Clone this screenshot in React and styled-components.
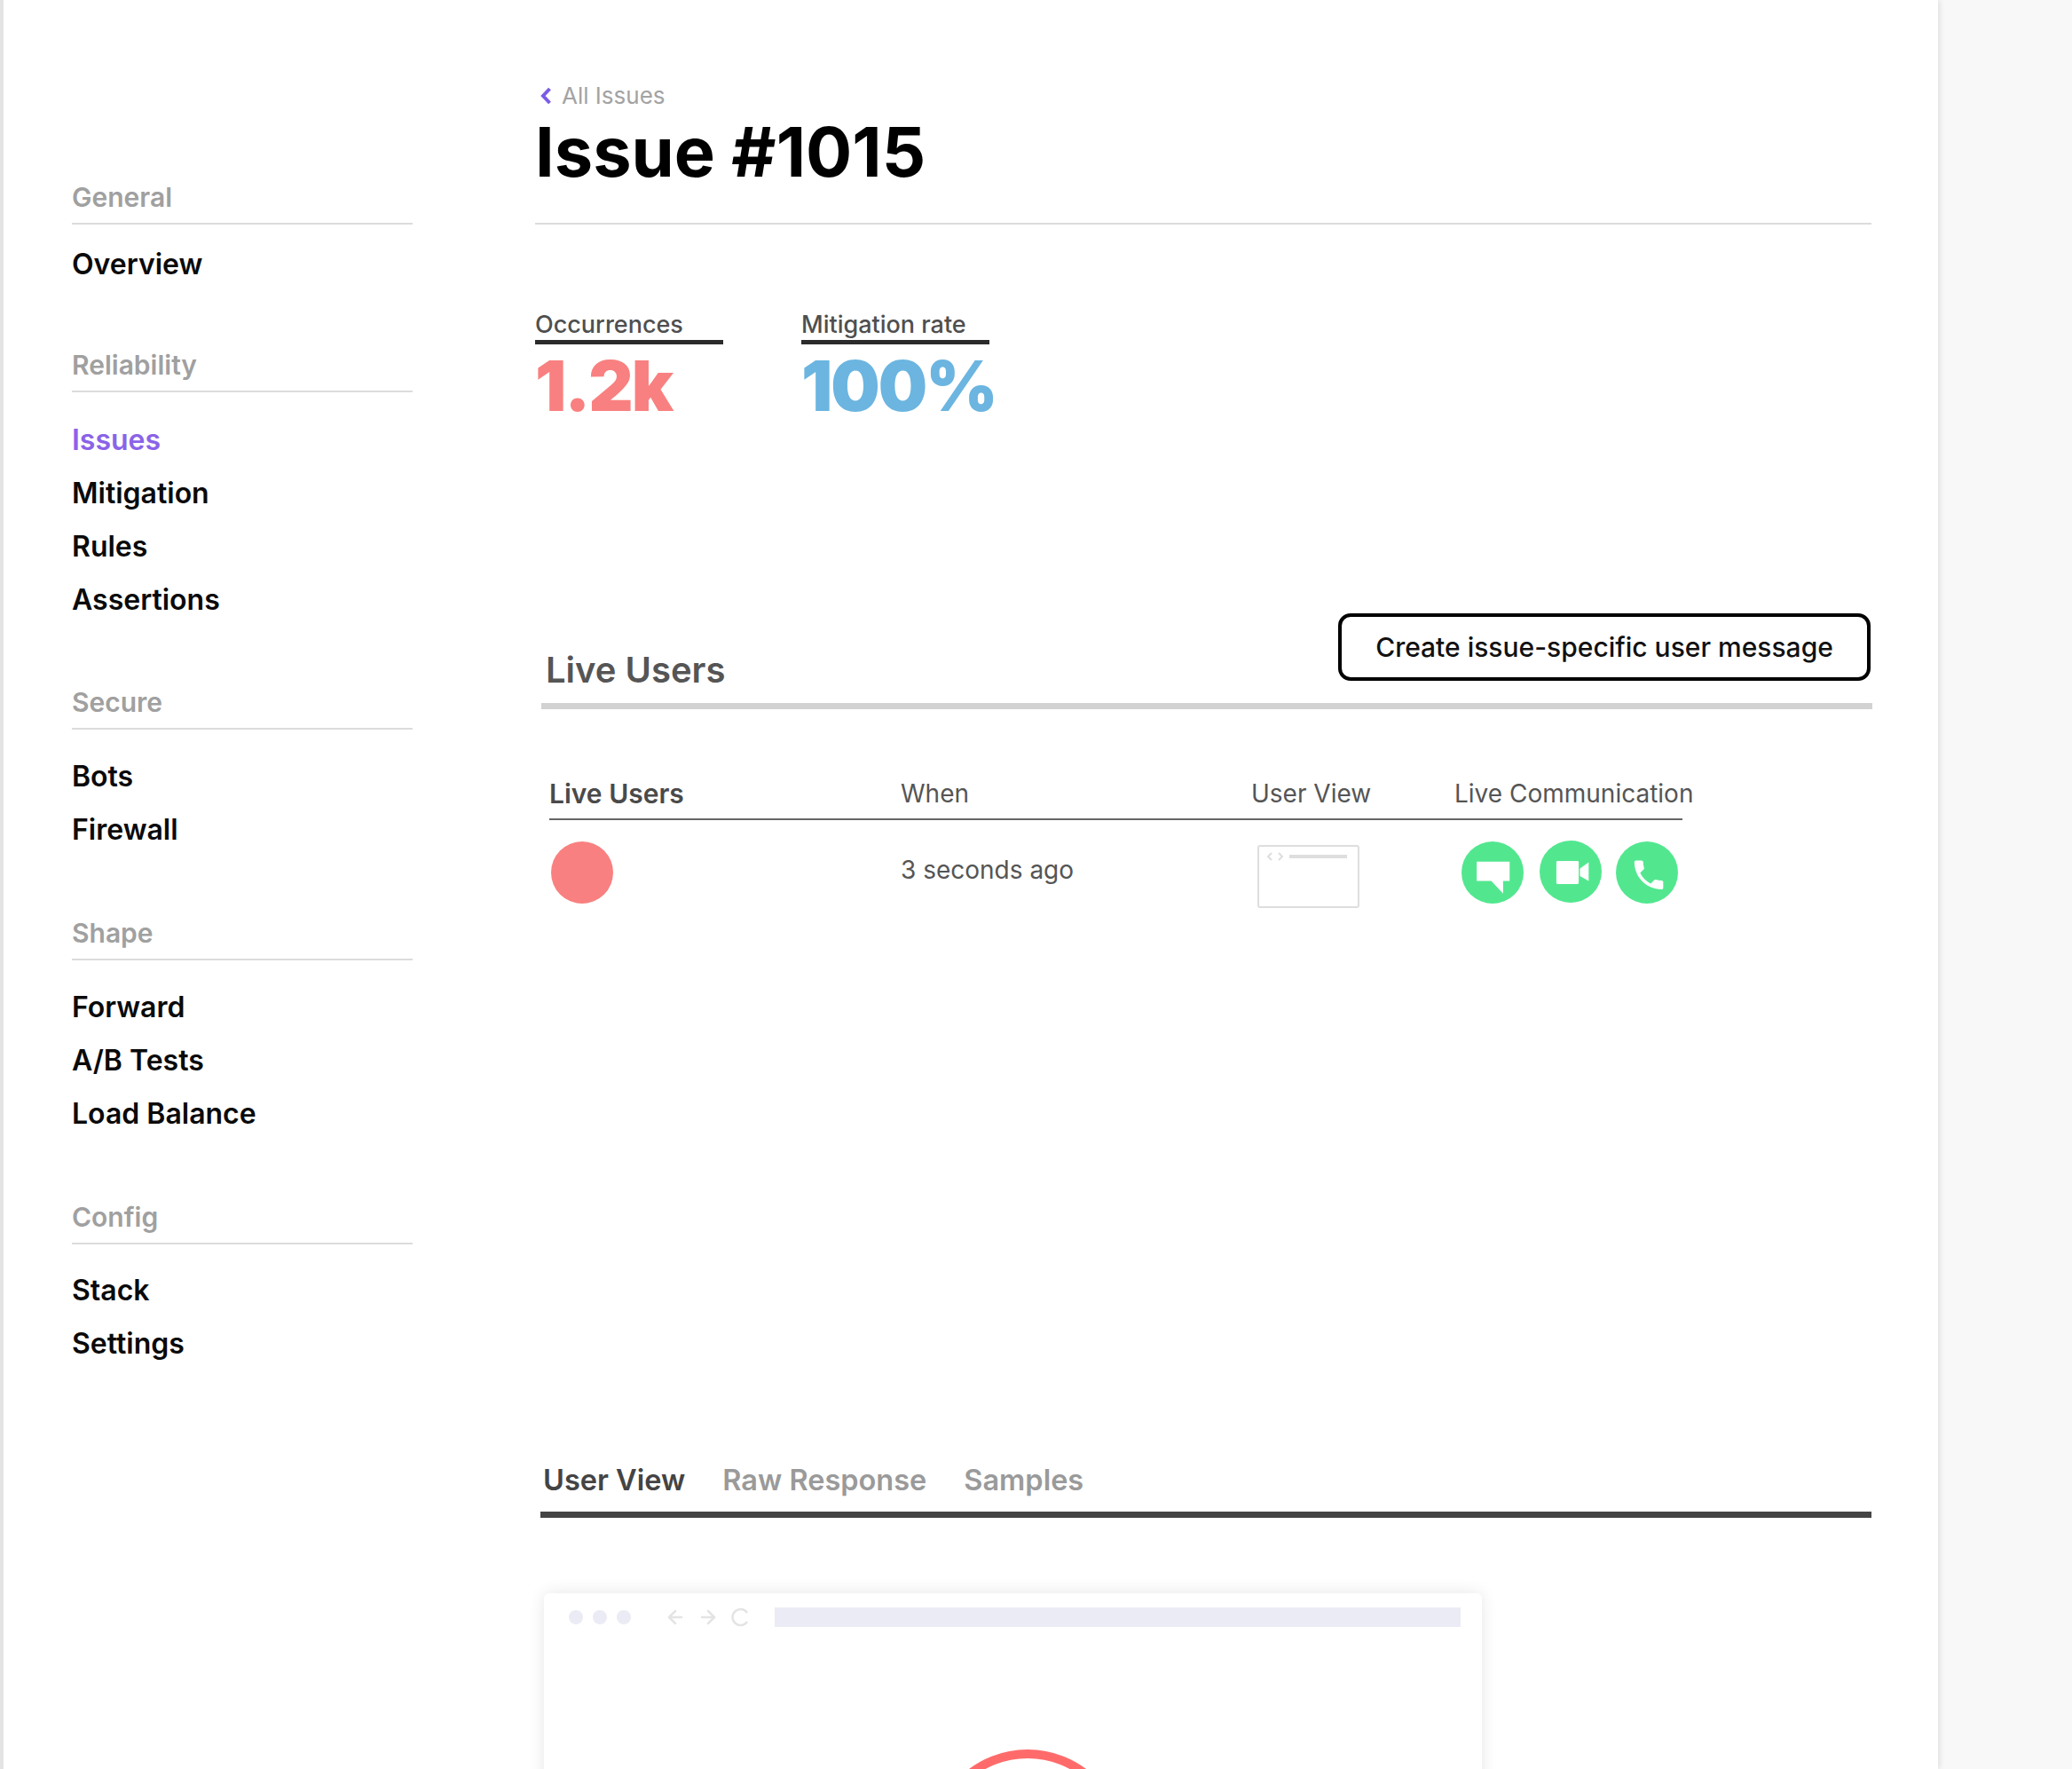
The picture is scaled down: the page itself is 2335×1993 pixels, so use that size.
import React from 'react'
import styled, { createGlobalStyle } from 'styled-components'
import { ArrowLeft, ArrowRight } from 'lucide-react'

const GlobalStyle = createGlobalStyle`
  html, body {
    margin: 0;
    padding: 0;
    background: #f8f8f8;
  }
  body {
    font-family: Inter, "Liberation Sans", sans-serif;
  }
`

const Page = styled.div`
  width: 2335px;
  height: 1993px;
  overflow: hidden;
  background: #f8f8f8;
`
const Sheet = styled.div`
  width: 2184px;
  height: 1993px;
  box-sizing: border-box;
  display: flex;
  background: #fff;
  border-left: 4px solid #e4e4e4;
  box-shadow: 2px 0 6px rgba(0, 0, 0, 0.1);
`
const Sidebar = styled.nav`
  width: 384px;
  flex: none;
  margin-left: 77px;
  padding-top: 206px;
`
const Group = styled.div`
  margin-top: ${p => p.$top || 0}px;
`
const GroupTitle = styled.div`
  font-size: 30px;
  line-height: 33px;
  font-weight: 600;
  color: #a0a0a0;
  padding-bottom: 12px;
  border-bottom: 2px solid #dcdcdc;
`
const Items = styled.div`
  padding-top: ${p => p.$pad}px;
`
const Item = styled.a`
  display: block;
  font-size: 32px;
  line-height: 60px;
  font-weight: 600;
  color: ${p => (p.$active ? '#8a63e8' : '#0a0a0a')};
`
const Main = styled.main`
  width: 1506px;
  flex: none;
  margin-left: 138px;
  padding-top: 93px;
`
const PageHead = styled.header`
  padding-bottom: 38px;
  border-bottom: 2px solid #dcdcdc;
`
const Back = styled.a`
  display: flex;
  align-items: center;
  gap: 11px;
  padding-left: 6px;
  font-size: 26px;
  line-height: 30px;
  color: #a3a3a3;
`
const Title = styled.h1`
  margin: 6px 0 0;
  font-size: 77.5px;
  line-height: 84px;
  font-weight: 700;
  color: #000;
`
const Stats = styled.div`
  display: flex;
  gap: 88px;
  margin-top: 98px;
`
const Stat = styled.div`
  width: 212px;
`
const StatLabel = styled.div`
  font-size: 27px;
  line-height: 30px;
  font-weight: 500;
  color: #4f4f4f;
  padding-bottom: 2px;
  border-bottom: 5px solid #2b2b2b;
  white-space: nowrap;
`
const StatValue = styled.div`
  padding-top: 3px;
  font-size: 78px;
  line-height: 88px;
  font-weight: 900;
  letter-spacing: -2px;
  white-space: nowrap;
  color: ${p => p.$color};
`
const LiveHead = styled.div`
  display: flex;
  justify-content: space-between;
  align-items: flex-end;
  margin: 212px 1px 0 12px;
`
const SectionTitle = styled.h2`
  margin: 0;
  font-size: 40px;
  line-height: 24px;
  font-weight: 600;
  color: #555;
`
const OutlineButton = styled.button`
  width: 600px;
  height: 76px;
  box-sizing: border-box;
  background: #fff;
  border: 4px solid #000;
  border-radius: 14px;
  font-family: inherit;
  font-size: 30px;
  font-weight: 500;
  color: #111;
`
const ThickRule = styled.div`
  height: 7px;
  margin: 25px -1px 0 7px;
  background: #d2d2d2;
`
const TableHead = styled.div`
  display: grid;
  grid-template-columns: 396px 395px 229px 257px;
  width: 1277px;
  margin: 80px 0 0 16px;
  padding-bottom: 13px;
  border-bottom: 2px solid #666;
`
const HeadCell = styled.div`
  font-size: ${p => (p.$strong ? 30 : 28)}px;
  line-height: 30px;
  font-weight: ${p => (p.$strong ? 600 : 400)};
  color: ${p => (p.$strong ? '#4a4a4a' : '#555')};
  white-space: nowrap;
`
const TableRow = styled.div`
  display: grid;
  grid-template-columns: 396px 395px 229px 257px;
  align-items: start;
  width: 1277px;
  height: 75px;
  margin-left: 16px;
  padding-top: 24px;
`
const Avatar = styled.div`
  width: 70px;
  height: 70px;
  margin-left: 2px;
  border-radius: 50%;
  background: #f98080;
`
const WhenText = styled.div`
  font-size: 28px;
  line-height: 30px;
  color: #555;
  margin-top: 17px;
`
const Thumb = styled.svg`
  display: block;
  margin: 4px 0 0 7px;
`
const Actions = styled.div`
  display: flex;
  gap: 17px;
  margin-left: 8px;
  & > :nth-child(2) {
    margin: -1px -1px 0 1px;
  }
`
const TabBar = styled.div`
  display: flex;
  gap: 42px;
  margin: 625px 0 0 6px;
  padding: 0 0 15px 3px;
  border-bottom: 7px solid #444;
`
const Tab = styled.div`
  font-size: 32.5px;
  line-height: 40px;
  font-weight: 600;
  color: ${p => (p.$active ? '#444' : '#9a9a9a')};
`
const BrowserCard = styled.div`
  width: 1057px;
  height: 400px;
  margin: 85px 0 0 10px;
  background: #fff;
  border-radius: 6px;
  box-shadow: 0 0 18px rgba(0, 0, 0, 0.1);
`
const BrowserBar = styled.div`
  display: flex;
  align-items: center;
  height: 22px;
  padding: 16px 24px 0 28px;
`
const Dot = styled.span`
  width: 16px;
  height: 16px;
  margin-right: 11px;
  border-radius: 50%;
  background: #ebebf5;
`
const Arrows = styled.div`
  display: flex;
  align-items: center;
  gap: 13px;
  margin: 0 28px 0 27px;
  color: #e4e4e4;
`
const AddressBar = styled.div`
  flex: 1;
  height: 22px;
  background: #ebebf5;
`
const Spinner = styled.div`
  width: 220px;
  height: 220px;
  box-sizing: border-box;
  margin: 138px 0 0 435px;
  border: 10px solid #ff6b6b;
  border-radius: 50%;
`

const groups = [
  { title: 'General', top: 0, pad: 15, items: ['Overview'] },
  { title: 'Reliability', top: 67, pad: 24, items: ['Issues', 'Mitigation', 'Rules', 'Assertions'] },
  { title: 'Secure', top: 69, pad: 23, items: ['Bots', 'Firewall'] },
  { title: 'Shape', top: 70, pad: 23, items: ['Forward', 'A/B Tests', 'Load Balance'] },
  { title: 'Config', top: 70, pad: 22, items: ['Stack', 'Settings'] },
]

const IconCircle = ({ children }) => (
  <svg width="70" height="70" viewBox="0 0 100 100">
    <circle cx="50" cy="50" r="50" fill="#52e78f" />
    {children}
  </svg>
)

export default function App() {
  return (
    <Page>
      <GlobalStyle />
      <Sheet>
        <Sidebar>
          {groups.map(g => (
            <Group key={g.title} $top={g.top}>
              <GroupTitle>{g.title}</GroupTitle>
              <Items $pad={g.pad}>
                {g.items.map(i => (
                  <Item key={i} $active={i === 'Issues'}>{i}</Item>
                ))}
              </Items>
            </Group>
          ))}
        </Sidebar>
        <Main>
          <PageHead>
            <Back>
              <svg width="13" height="20" viewBox="0 0 13 20">
                <path d="M10.5 2 L3 10 L10.5 18" fill="none" stroke="#7c5ce6" strokeWidth="4" />
              </svg>
              All Issues
            </Back>
            <Title>Issue #1015</Title>
          </PageHead>
          <Stats>
            <Stat>
              <StatLabel>Occurrences</StatLabel>
              <StatValue $color="#f98080">1.2k</StatValue>
            </Stat>
            <Stat>
              <StatLabel>Mitigation rate</StatLabel>
              <StatValue $color="#6bb5e0">100%</StatValue>
            </Stat>
          </Stats>
          <LiveHead>
            <SectionTitle>Live Users</SectionTitle>
            <OutlineButton>Create issue-specific user message</OutlineButton>
          </LiveHead>
          <ThickRule />
          <TableHead>
            <HeadCell $strong>Live Users</HeadCell>
            <HeadCell>When</HeadCell>
            <HeadCell>User View</HeadCell>
            <HeadCell>Live Communication</HeadCell>
          </TableHead>
          <TableRow>
            <Avatar />
            <WhenText>3 seconds ago</WhenText>
            <Thumb width="115" height="71" viewBox="0 0 115 71">
              <rect x="1" y="1" width="113" height="69" rx="2" fill="#fff" stroke="#dedede" strokeWidth="2" />
              <path d="M16 9 L12 13 L16 17 M24 9 L28 13 L24 17" fill="none" stroke="#dedede" strokeWidth="2" />
              <rect x="36" y="11" width="65" height="4" fill="#dedede" />
            </Thumb>
            <Actions>
              <IconCircle>
                <path d="M24.5 32.5 H77.5 V63.5 H67 V84 L48 63.5 H24.5 Z" fill="#fff" />
              </IconCircle>
              <IconCircle>
                <rect x="27" y="33" width="36" height="37" rx="2" fill="#fff" />
                <path d="M65 45 L79 35 V65 L65 57 Z" fill="#fff" />
              </IconCircle>
              <IconCircle>
                <path
                  transform="translate(22 23) scale(2.58)"
                  fill="#fff"
                  d="M6.62 10.79c1.44 2.83 3.76 5.14 6.59 6.59l2.2-2.2c.27-.27.67-.36 1.02-.24 1.12.37 2.33.57 3.57.57.55 0 1 .45 1 1V20c0 .55-.45 1-1 1-9.39 0-17-7.61-17-17 0-.55.45-1 1-1h3.5c.55 0 1 .45 1 1 0 1.25.2 2.45.57 3.57.11.35.03.74-.25 1.02l-2.2 2.2z"
                />
              </IconCircle>
            </Actions>
          </TableRow>
          <TabBar>
            <Tab $active>User View</Tab>
            <Tab>Raw Response</Tab>
            <Tab>Samples</Tab>
          </TabBar>
          <BrowserCard>
            <BrowserBar>
              <Dot />
              <Dot />
              <Dot />
              <Arrows>
                <ArrowLeft size={24} strokeWidth={2.5} />
                <ArrowRight size={24} strokeWidth={2.5} />
                <svg width="22" height="22" viewBox="0 0 22 22">
                  <path d="M19 6 A9 9 0 1 0 19 16" fill="none" stroke="#e4e4e4" strokeWidth="2.5" />
                </svg>
              </Arrows>
              <AddressBar />
            </BrowserBar>
            <Spinner />
          </BrowserCard>
        </Main>
      </Sheet>
    </Page>
  )
}
